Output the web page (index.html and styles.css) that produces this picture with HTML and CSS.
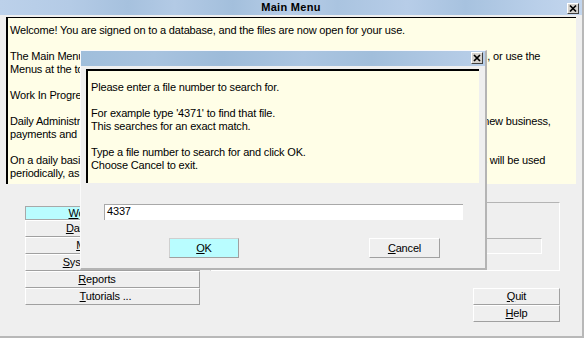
FILE: index.html
```html
<!DOCTYPE html>
<html lang="en">
<head>
    <meta charset="UTF-8">
    <title>Main Menu</title>
    <link rel="stylesheet" href="styles.css">
</head>
<body>
    <div class="window">
        <div class="titlebar">
            <span class="title">Main Menu</span>
            <span class="close">
                <svg width="10" height="9" viewBox="0 0 10 9"><path d="M2 1.5 L8 7.5 M8 1.5 L2 7.5" stroke="#000" stroke-width="1.7" fill="none"/></svg>
            </span>
        </div>

        <div class="info">
            <p>Welcome! You are signed on to a database, and the files are now open for your use.</p>
            <p>The Main Menu buttons below will take you to all the main parts of the system you will need to work in, or use the<br>
               Menus at the top of the screen to go straight to the form or report that you want.</p>
            <p>Work In Progress lists each of the files that are currently open for work.</p>
            <p>Daily Administration helps you record the day to day work on each file, such as time, disbursements, new business,<br>
               payments and receipts, and prints the daily reports that you need.</p>
            <p>On a daily basis you should use the Daily Administration and Work In Progress screens; other options will be used<br>
               periodically, as and when they are required.</p>
        </div>

        <div class="lower">
            <div class="nav">
                <div class="btn current"><u>W</u>ork In Progress</div>
                <div class="btn"><u>D</u>aily Administration</div>
                <div class="btn"><u>M</u>aintenance ...</div>
                <div class="btn"><u>S</u>ystem Maintenance</div>
                <div class="btn reports"><u>R</u>eports</div>
                <div class="btn tutorials"><u>T</u>utorials ...</div>
            </div>
            <div class="frame">
                <div class="field"></div>
            </div>
            <div class="actions">
                <div class="btn"><u>Q</u>uit</div>
                <div class="btn"><u>H</u>elp</div>
            </div>
        </div>

        <!-- Find file dialog -->
        <div class="dialog">
            <div class="titlebar dialog-title">
                <span class="close">
                    <svg width="10" height="10" viewBox="0 0 10 10"><path d="M2 2 L8 8 M8 2 L2 8" stroke="#000" stroke-width="1.7" fill="none"/></svg>
                </span>
            </div>
            <div class="info prompt">
                <p>Please enter a file number to search for.</p>
                <p>For example type '4371' to find that file.<br>
                   This searches for an exact match.</p>
                <p>Type a file number to search for and click OK.<br>
                   Choose Cancel to exit.</p>
            </div>
            <div class="entry">4337</div>
            <div class="buttons">
                <div class="btn default"><u>O</u>K</div>
                <div class="btn cancel"><u>C</u>ancel</div>
            </div>
        </div>
    </div>
</body>
</html>
```

FILE: styles.css
```css
body {
    margin: 0;
    font-family: "Liberation Sans", Arial, sans-serif;
    font-size: 11px;
    letter-spacing: -0.17px;
    color: #000;
    background: #efefef;
}

.window {
    position: relative;
    width: 584px;
    height: 338px;
    box-sizing: border-box;
    border-right: 2px solid #b8b8b8;
    border-bottom: 2px solid #b8b8b8;
    background: #efefef;
    overflow: hidden;
}

.titlebar {
    display: grid;
    grid-template-columns: 1fr auto 1fr;
    align-items: start;
    height: 15px;
    background: linear-gradient(90deg, #bcd1ea 0%, #b4cbe6 12%, #a6c1de 22%, #b3cae5 30%, #a3bfdc 40%, #b8cee8 50%, #aac4e0 58%, #b7cde8 70%, #a7c2df 80%, #b9cfe9 92%, #c3d6ee 100%);
}

.title {
    grid-column: 2;
    font-weight: bold;
    line-height: 15px;
    letter-spacing: 0.3px;
}

.close {
    grid-column: 3;
    justify-self: end;
    display: flex;
    align-items: center;
    justify-content: center;
    width: 12px;
    height: 11px;
    margin: 3px 3px 0 0;
    box-sizing: border-box;
    background: #d6d3ce;
    border-top: 1px solid #fff;
    border-left: 1px solid #fff;
    border-right: 1px solid #404040;
    border-bottom: 1px solid #404040;
}

.info {
    height: 167px;
    margin: 2px 6px 0 6px;
    padding: 6px 0 0 2px;
    box-sizing: border-box;
    border-top: 1px solid #000;
    border-left: 2px solid #000;
    background: #fffee7;
    line-height: 13px;
    white-space: nowrap;
    overflow: hidden;
}

.info p {
    margin: 0 0 13px;
}

.lower {
    display: grid;
    grid-template-columns: 175px 350px;
    column-gap: 10px;
    padding: 18px 0 0 25px;
}

.nav {
    grid-row: 1 / span 2;
    margin-top: 4px;
}

.btn {
    box-sizing: border-box;
    height: 17px;
    line-height: 15px;
    text-align: center;
    background: #efefef;
    border-top: 1px solid #fff;
    border-left: 1px solid #fff;
    border-right: 1px solid #a0a0a0;
    border-bottom: 1px solid #a0a0a0;
}

.nav .current {
    height: 14px;
    line-height: 12px;
    padding-right: 6px;
    background: #b9fdff;
    border: 1px solid #a8a8a8;
}

.nav .reports {
    padding-right: 31px;
}

.nav .tutorials {
    padding-right: 14px;
}

.frame {
    height: 69px;
    box-sizing: border-box;
    border-top: 1px solid #b4b4b4;
    border-left: 1px solid #b4b4b4;
    border-right: 1px solid #fff;
    border-bottom: 1px solid #fff;
}

.field {
    width: 150px;
    height: 16px;
    margin: 35px 17px 0 auto;
    box-sizing: border-box;
    border-top: 1px solid #b4b4b4;
    border-left: 1px solid #b4b4b4;
    border-right: 1px solid #fff;
    border-bottom: 1px solid #fff;
}

.actions {
    grid-column: 2;
    justify-self: end;
    width: 87px;
    margin-top: 17px;
}

/* dialog sits over the main window */
.dialog {
    position: absolute;
    left: 80px;
    top: 50px;
    width: 407px;
    height: 220px;
    box-sizing: border-box;
    border-top: 1px solid #fafafa;
    border-left: 1px solid #fafafa;
    border-right: 2px solid #b4b4b4;
    border-bottom: 2px solid #b4b4b4;
    background: #efefef;
}

.dialog-title {
    background: linear-gradient(90deg, #a0bedb 0%, #a8c3df 18%, #9dbbd9 35%, #abc5e1 55%, #a1bedb 72%, #b1c9e4 90%, #b9cfe9 100%);
}

.dialog-title .close {
    height: 12px;
    margin: 1px 2px 0 0;
}

.prompt {
    height: 114px;
    margin: 3px 6px 0 5px;
    padding: 10px 0 0 3px;
    border-top: 2px solid #000;
}

.entry {
    width: 359px;
    height: 16px;
    margin: 21px 0 0 23px;
    padding-left: 2px;
    box-sizing: border-box;
    line-height: 13px;
    background: #fff;
    border-top: 1px solid #a8a8a8;
    border-left: 1px solid #a8a8a8;
}

.buttons {
    display: flex;
    gap: 130px;
    margin-top: 18px;
    padding-left: 88px;
}

.buttons .btn {
    width: 70px;
    height: 20px;
    line-height: 18px;
}

.buttons .default {
    background: #b9fdff;
    border-color: #cfcfcf #a0a0a0 #a0a0a0 #cfcfcf;
}

.buttons .cancel {
    width: 71px;
}
```
